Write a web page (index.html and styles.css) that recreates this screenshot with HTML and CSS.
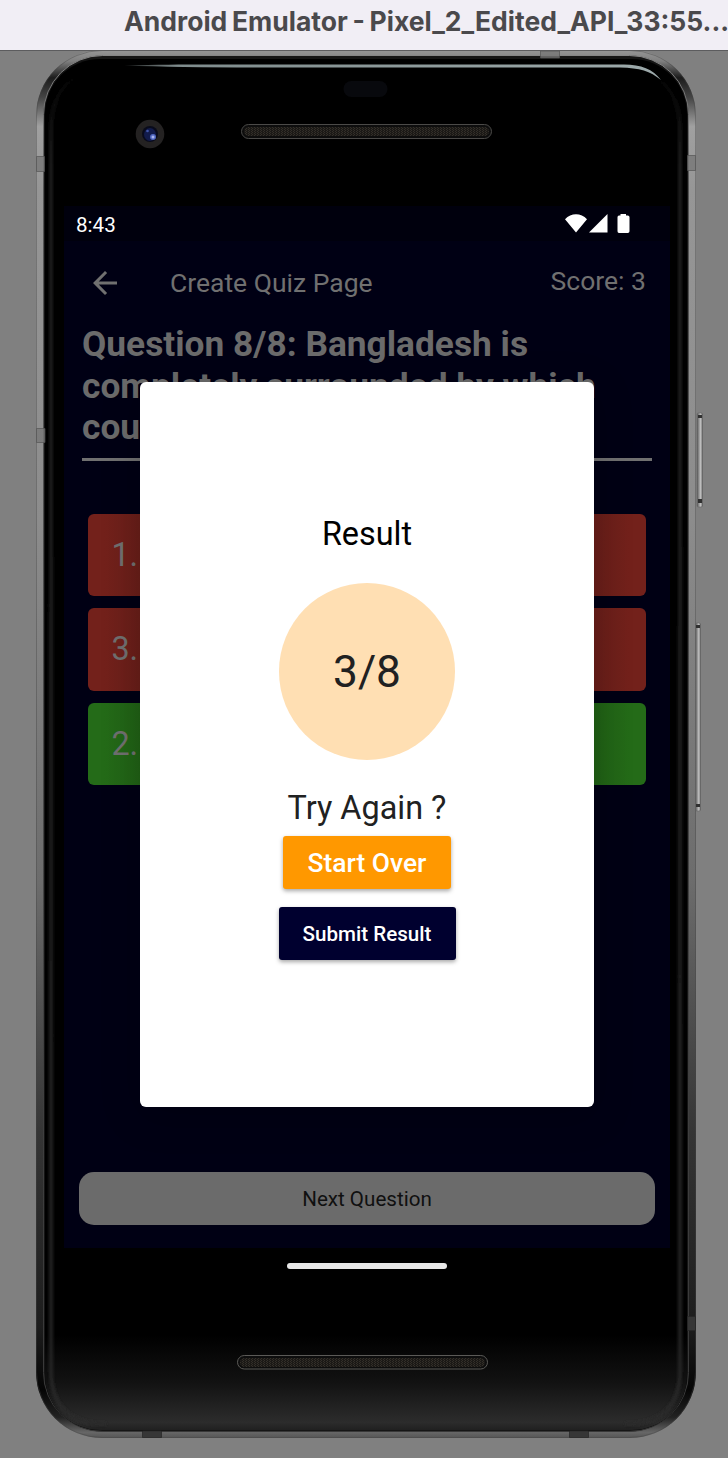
FILE: index.html
```html
<!DOCTYPE html>
<html lang="en">
<head>
<meta charset="utf-8">
<title>Android Emulator</title>
<link rel="stylesheet" href="styles.css">
</head>
<body>
<header class="titlebar">Android Emulator - Pixel_2_Edited_API_33:55...</header>
<main class="desktop">
  <svg class="device" width="728" height="1458" viewBox="0 0 728 1458" aria-hidden="true">
    <defs>
      <linearGradient id="metal" x1="0" y1="50" x2="0" y2="1438" gradientUnits="userSpaceOnUse">
        <stop offset="0" stop-color="#969696"/><stop offset=".008" stop-color="#808080"/>
        <stop offset=".02" stop-color="#1c1c1c"/><stop offset=".034" stop-color="#444"/>
        <stop offset=".055" stop-color="#a0a0a0"/><stop offset=".1" stop-color="#969696"/>
        <stop offset=".34" stop-color="#8c8c8c"/><stop offset=".6" stop-color="#6c6c6c"/>
        <stop offset=".78" stop-color="#353535"/><stop offset=".92" stop-color="#1d1d1d"/>
        <stop offset=".965" stop-color="#050505"/><stop offset=".985" stop-color="#222"/>
        <stop offset=".996" stop-color="#666"/><stop offset="1" stop-color="#555"/>
      </linearGradient>
      <linearGradient id="rim" x1="0" y1="50" x2="0" y2="1438" gradientUnits="userSpaceOnUse">
        <stop offset="0" stop-color="#888"/><stop offset=".1" stop-color="#555"/>
        <stop offset=".6" stop-color="#444"/><stop offset="1" stop-color="#383838"/>
      </linearGradient>
      <linearGradient id="chin" x1="0" y1="1335" x2="0" y2="1430" gradientUnits="userSpaceOnUse">
        <stop offset="0" stop-color="#000"/><stop offset=".5" stop-color="#121212"/>
        <stop offset=".92" stop-color="#2c2c2c"/><stop offset="1" stop-color="#202020"/>
      </linearGradient>
      <linearGradient id="glass" x1="0" y1="70" x2="0" y2="1425" gradientUnits="userSpaceOnUse">
        <stop offset="0" stop-color="#252525" stop-opacity="0"/><stop offset=".07" stop-color="#252525"/>
        <stop offset="1" stop-color="#2a2a2a"/>
      </linearGradient>
      <linearGradient id="gleam" x1="124" x2="661" y1="0" y2="0" gradientUnits="userSpaceOnUse">
        <stop offset="0" stop-color="#9ba8a9" stop-opacity=".2"/><stop offset=".1" stop-color="#7f8c8d"/>
        <stop offset="1" stop-color="#9daaab"/>
      </linearGradient>
      <linearGradient id="key" x1="0" x2="1" y1="0" y2="0">
        <stop offset="0" stop-color="#555"/><stop offset=".3" stop-color="#888"/>
        <stop offset=".7" stop-color="#c8c8c8"/><stop offset="1" stop-color="#555"/>
      </linearGradient>
      <pattern id="mesh" width="3" height="2" patternUnits="userSpaceOnUse">
        <rect width="3" height="2" fill="#1b1916"/><path d="M0 0h1v1H0zM2 1h1v1H2z" fill="#332f29"/>
      </pattern>
      <filter id="soft" x="-10%" y="-10%" width="120%" height="120%"><feGaussianBlur stdDeviation="1.600"/></filter>
      <clipPath id="face"><rect x="45" y="59" width="642" height="1371" rx="55"/></clipPath>
    </defs>
    <rect x="36" y="50" width="660" height="1388" rx="66" fill="url(#metal)"/>
    <rect x="36.500" y="50.500" width="659" height="1387" rx="65.500" fill="none" stroke="#444" stroke-opacity=".4"/>
    <rect x="43.500" y="55.500" width="645" height="1376" rx="59" fill="#151515" stroke="url(#rim)"/>
    <rect x="45" y="59" width="642" height="1371" rx="55" fill="#000"/>
    <g clip-path="url(#face)">
      <path d="M45 1335h642v95H45z" fill="url(#chin)"/>
      <path d="M51 1370V130Q51 67 120 67M680 1370V130Q680 67 611 67M51 1370Q51 1424 106 1424M680 1370Q680 1424 625 1424" fill="none" stroke="url(#glass)" stroke-width="3" filter="url(#soft)"/>
    </g>
    <path d="M124 65.500C180 64 210 64.500 260 64.500H624C641 64.500 653 69 661 80 650 71 640 68 620 67.500H260Q180 67.500 124 65.500Z" fill="url(#gleam)"/>
    <g fill="#777" fill-opacity=".8" stroke="#555" stroke-width=".7">
      <path d="M36.500 156.500h8v15h-8zM36.500 428.500h8.500v14h-8.500zM687.500 155.500h8v15h-8zM540.500 51v7h19v-7z"/>
    </g>
    <g fill="#363636" stroke="#252525" stroke-width=".7">
      <path d="M142.500 1431v6.500h19V1431zM569.500 1431v6.500h19V1431zM687.500 1316.500h8v14h-8z"/>
    </g>
    <g stroke="#666" stroke-width=".6">
      <rect x="697" y="413" width="5.500" height="94" rx="1.500" fill="url(#key)"/>
      <rect x="695.500" y="623" width="5" height="188" rx="1.500" fill="url(#key)"/>
    </g>
    <path d="M698 415h4v3h-4zM698 499h4v4h-4zM696 625h4v3h-4zM696 804h4v3h-4z" fill="#303030"/>
    <rect x="343.500" y="81" width="44" height="16" rx="8" fill="#08090d"/>
    <circle cx="150" cy="134" r="14.300" fill="#242222"/>
    <circle cx="150" cy="134" r="8" fill="#090b1b"/>
    <ellipse cx="150" cy="134.500" rx="6" ry="6.500" fill="#121b4b"/>
    <circle cx="153" cy="137" r="3" fill="#5067c0"/><circle cx="153" cy="137" r="1.500" fill="#a9b5ef"/>
    <circle cx="147.500" cy="131" r="1.300" fill="#4055aa"/>
    <rect x="241.500" y="124.500" width="250" height="14" rx="7" fill="#0d0d0d" stroke="#4b4a48"/>
    <rect x="244" y="127" width="245" height="9" rx="4.500" fill="url(#mesh)"/>
    <rect x="237.500" y="1355.500" width="250" height="13.500" rx="6.750" fill="#0d0d0d" stroke="#5b5a57"/>
    <rect x="240" y="1358" width="245" height="9" rx="4.500" fill="url(#mesh)"/>
  </svg>

  <section class="screen">
    <div class="status">
      <span>8:43</span>
      <svg class="status-icons" width="66" height="20" viewBox="0 0 66 20" fill="#fff">
        <path d="M0 5.200C6-1.400 16-1.400 22 5.200L11 18.500ZM24 18.500L42.500 0V18.500ZM55.500 1.500V0H61V1.500H62.800Q64.500 1.500 64.500 3.200V17.300Q64.500 19 62.800 19H54Q52.500 19 52.500 17.300V3.200Q52.500 1.500 54 1.500Z"/>
      </svg>
    </div>
    <div class="appbar">
      <svg width="24" height="24" viewBox="4 4 16 16" fill="#707070"><path d="M20 11H7.830l5.590-5.590L12 4l-8 8 8 8 1.410-1.410L7.830 13H20v-2z"/></svg>
      <h1 class="title">Create Quiz Page</h1>
      <span class="score">Score: 3</span>
    </div>
    <h2 class="question">Question 8/8: Bangladesh is<br>completely surrounded by which<br>country?</h2>
    <div class="options">
      <div class="option wrong">1.</div>
      <div class="option wrong">3.</div>
      <div class="option right">2.</div>
    </div>
    <div class="next">Next Question</div>
    <div class="dialog">
      <div class="heading">Result</div>
      <div class="circle">3/8</div>
      <div class="again">Try Again ?</div>
      <div class="button start">Start Over</div>
      <div class="button submit">Submit Result</div>
    </div>
  </section>
  <div class="home"></div>
</main>
</body>
</html>
```
FILE: styles.css
```css
* { box-sizing: border-box; }
body { margin: 0; width: 728px; height: 1458px; overflow: hidden; background: #808080; font-family: Roboto, sans-serif; }
.titlebar {
  position: relative; z-index: 2; height: 51px; padding-left: 124px;
  background: #f1eef5; border-bottom: 1px solid #5c5c5e;
  font: 700 26.5px/42px Inter, sans-serif; word-spacing: -1.6px; color: #4a494c; white-space: nowrap;
}
.desktop { display: flex; flex-direction: column; align-items: center; padding: 155px 0 0 6px; }
.device { position: absolute; left: 0; top: 0; }
.screen {
  position: relative; display: flex; flex-direction: column;
  width: 606px; height: 1042px; background: #000014; color: #707070;
}
.status {
  display: flex; justify-content: space-between; align-items: center; height: 35px;
  padding: 3px 39.500px 0 12px; background: #00000d; color: #fff; font-size: 20.6px;
}
.status-icons { margin-top: -3px; }
.appbar { display: flex; align-items: center; height: 83px; padding: 0 24px 0 29px; font-size: 26.5px; }
.title { margin: 0 0 0 53px; font-size: 26.5px; font-weight: 400; }
.score { margin: -4px 0 0 auto; }
.question {
  margin: 0 18px; height: 137px; border-bottom: 3px solid #707070;
  font-size: 35.3px; line-height: 41.5px; font-weight: 700; white-space: nowrap; color: #6b6b6b;
}
.options { display: flex; flex-direction: column; gap: 12px; padding: 53px 24px 0; }
.option { height: 82.300px; border-radius: 6px; padding-left: 23.500px; font-size: 32.4px; line-height: 83px; letter-spacing: -.3px; color: #707070; }
.wrong { background: linear-gradient(90deg, #73211b 16px, #691e19 52px, #691e19 506px, #73211b 542px); }
.right { background: linear-gradient(90deg, #246b18 16px, #206115 52px, #206115 506px, #246b18 542px); }
.next {
  height: 53px; margin: auto 15px 23px; border-radius: 15px; background: #6b6b6b; color: #101010;
  text-align: center; font-size: 20.600px; line-height: 54px;
}
.dialog {
  position: absolute; left: 76px; top: 176.400px; width: 454px; height: 725px;
  display: flex; flex-direction: column; align-items: center; padding-top: 131.600px;
  border-radius: 6px; background: #fff; color: #212121; box-shadow: 0 8px 40px rgba(0,0,0,.2);
}
.heading { height: 69px; font-size: 32.400px; line-height: 40px; color: #000; }
.circle { width: 176.500px; height: 177px; flex: none; border-radius: 50%; background: #ffdfb3; text-align: center; font-size: 44.200px; line-height: 178px; }
.again { margin-top: 28px; height: 48px; font-size: 32.400px; line-height: 40px; }
.button { height: 53px; border-radius: 3px; color: #fff; text-align: center; line-height: 55px; font-weight: 500; box-shadow: 0 2px 4px rgba(0,0,0,.35); }
.start { width: 168px; background: #ff9800; font-size: 26.400px; }
.submit { width: 177px; margin-top: 18px; background: #00002f; font-size: 20.600px; }
.home { position: relative; width: 160px; height: 6px; margin-top: 15px; border-radius: 3px; background: #e8e8e8; }
```
